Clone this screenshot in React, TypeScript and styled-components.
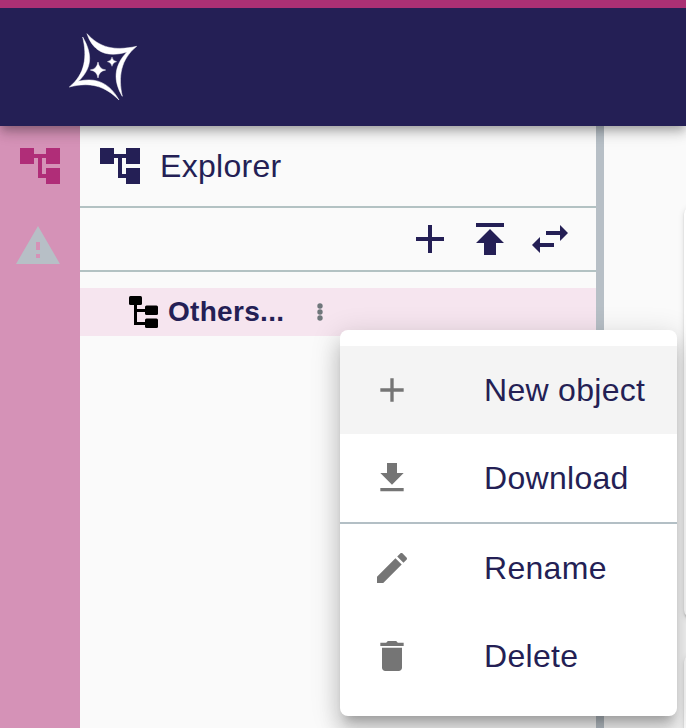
import React from 'react';
import styled, { createGlobalStyle } from 'styled-components';

const NAVY = '#241f55';
const PINK = '#b02d78';
const GREY = '#b7bfc6';
const RULE = '#b3bfc5';

const GlobalStyle = createGlobalStyle`
  * { box-sizing: border-box; }
  body {
    margin: 0;
    overflow: hidden;
    font-family: "Liberation Sans", Helvetica, Arial, sans-serif;
    color: ${NAVY};
    background: #fafafa;
  }
`;

const Page = styled.div`
  position: relative;
  display: flex;
  flex-direction: column;
  width: 686px;
  height: 728px;
  overflow: hidden;
`;

const AppBar = styled.header`
  position: relative;
  z-index: 1;
  flex: none;
  height: 126px;
  padding: 24px 0 0 68px;
  border-top: 8px solid #ab3074;
  background: ${NAVY};
  box-shadow: 0 4px 8px -2px rgba(0, 0, 0, 0.2), 0 8px 10px 0 rgba(0, 0, 0, 0.14),
    0 2px 20px 0 rgba(0, 0, 0, 0.12);
`;

const Logo = styled.svg`
  display: block;
  width: 70px;
  height: 70px;
  fill: #fff;
`;

const Workbench = styled.div`
  display: flex;
  flex: 1;
  min-height: 0;
`;

const Rail = styled.nav`
  display: flex;
  flex: none;
  flex-direction: column;
  align-items: flex-start;
  gap: 32px;
  width: 80px;
  padding: 16px 0 0 16px;
  background: #d592b7;
`;

const RailItem = styled.div<{ $shift?: number; $color: string }>`
  display: flex;
  margin-left: ${(p) => p.$shift ?? 0}px;
  color: ${(p) => p.$color};
`;

const Icon = styled.svg<{ $size: number }>`
  display: block;
  flex: none;
  width: ${(p) => p.$size}px;
  height: ${(p) => p.$size}px;
  fill: currentColor;
`;

const Panel = styled.section`
  display: flex;
  flex: none;
  flex-direction: column;
  width: 524px;
  border-right: 8px solid ${GREY};
`;

const PanelHeader = styled.div`
  display: flex;
  align-items: center;
  gap: 16px;
  height: 82px;
  padding: 0 16px;
  border-bottom: 2px solid #b3c2c3;
`;

const PanelTitle = styled.h1`
  margin: 0;
  font-size: 32px;
  font-weight: 400;
  line-height: 48px;
  letter-spacing: 0.3px;
`;

const Toolbar = styled.div`
  display: flex;
  justify-content: flex-end;
  gap: 12px;
  height: 64px;
  padding: 7px 22px 0 0;
  border-bottom: 2px solid #b3c2c3;
`;

const TreeRow = styled.div`
  display: flex;
  align-items: center;
  height: 48px;
  margin-top: 16px;
  padding-left: 48px;
  background: #f6e5ef;
`;

const TreeIcon = styled.svg`
  width: 32px;
  height: 32px;
  fill: #000;
`;

const TreeLabel = styled.span`
  width: 154px;
  padding-left: 8px;
  font-size: 28px;
  font-weight: 700;
  line-height: 48px;
  letter-spacing: 0.3px;
`;

const MoreIcon = styled.svg`
  width: 12px;
  height: 24px;
  fill: #6f777b;
`;

const Cards = styled.main`
  display: flex;
  flex: none;
  flex-direction: column;
  gap: 36px;
  width: 480px;
  padding: 80px 0 0 80px;
`;

const Card = styled.div<{ $height: number }>`
  flex: none;
  height: ${(p) => p.$height}px;
  border-radius: 8px;
  background: #fff;
  box-shadow: 0 4px 2px -2px rgba(0, 0, 0, 0.2), 0 2px 2px 0 rgba(0, 0, 0, 0.14),
    0 2px 6px 0 rgba(0, 0, 0, 0.12);
`;

const Menu = styled.ul`
  position: absolute;
  z-index: 2;
  top: 330px;
  left: 340px;
  width: 337px;
  height: 386px;
  margin: 0;
  padding: 16px 0;
  list-style: none;
  border-radius: 8px;
  background: #fff;
  box-shadow: 0 10px 10px -6px rgba(0, 0, 0, 0.2), 0 16px 20px 2px rgba(0, 0, 0, 0.14),
    0 6px 28px 4px rgba(0, 0, 0, 0.12);
`;

const MenuItem = styled.li<{ $active?: boolean }>`
  display: flex;
  align-items: center;
  height: 88px;
  padding-left: 32px;
  background: ${(p) => (p.$active ? '#f4f4f4' : 'transparent')};
`;

const MenuIcon = styled.div`
  width: 112px;
  color: #757575;
`;

const MenuLabel = styled.span`
  font-size: 32px;
  line-height: 48px;
  letter-spacing: 0.3px;
`;

const Divider = styled.li`
  height: 2px;
  background: ${RULE};
`;

const paths = {
  tree: 'M22 11V3h-7v3H9V3H2v8h7V8h2v10h4v3h7v-8h-7v3h-2V8h2v3z',
  warning: 'M1 21h22L12 2 1 21zm12-3h-2v-2h2v2zm0-4h-2v-4h2v4z',
  add: 'M19 13h-6v6h-2v-6H5v-2h6V5h2v6h6v2z',
  publish: 'M5 4v2h14V4H5zm0 10h4v6h6v-6h4l-7-7-7 7z',
  swap: 'M6.99 11L3 15l3.99 4v-3H14v-2H6.99v-3zM21 9l-3.99-4v3H10v2h7.01v3L21 9z',
  download: 'M19 9h-4V3H9v6H5l7 7 7-7zM5 18v2h14v-2H5z',
  edit: 'M3 17.25V21h3.75L17.81 9.94l-3.75-3.75L3 17.25zM20.71 7.04c.39-.39.39-1.02 0-1.41l-2.34-2.34c-.39-.39-1.02-.39-1.41 0l-1.83 1.83 3.75 3.75 1.83-1.83z',
  remove: 'M6 19c0 1.1.9 2 2 2h8c1.1 0 2-.9 2-2V7H6v12zM19 4h-3.5l-1-1h-5l-1 1H5v2h14V4z',
};

type IconName = keyof typeof paths;

const Glyph = ({ name, size = 48 }: { name: IconName; size?: number }) => (
  <Icon viewBox="0 0 24 24" $size={size} aria-hidden>
    <path d={paths[name]} />
  </Icon>
);

const Entry = ({ icon, label, active }: { icon: IconName; label: string; active?: boolean }) => (
  <MenuItem $active={active}>
    <MenuIcon>
      <Glyph name={icon} size={40} />
    </MenuIcon>
    <MenuLabel>{label}</MenuLabel>
  </MenuItem>
);

export default function App() {
  return (
    <Page>
      <GlobalStyle />
      <AppBar>
        <Logo viewBox="54 36 210 210">
          <g stroke="#fff" strokeWidth="1.5" strokeLinejoin="bevel">
            <path d="M111 41C148 82 190 94 260 79C212 118 204 170 217 229C190 184 190 138 231 96C178 112 131 102 111 41Z" />
            <path d="M98 51C130 105 125 146 85 184C137 171 178 188 207 240C164 197 120 185 58 201C106 162 112 110 98 51Z" />
          </g>
          <path d="M144 126Q147 147 167 150Q147 153 144 174Q141 153 121 150Q141 147 144 126Z" stroke="#fff" strokeWidth="1.5" />
          <path d="M186 111Q188 123 200 125Q188 127 186 139Q184 127 172 125Q184 123 186 111Z" stroke="#fff" />
        </Logo>
      </AppBar>
      <Workbench>
        <Rail>
          <RailItem $color={PINK}>
            <Glyph name="tree" />
          </RailItem>
          <RailItem $color={GREY} $shift={-2}>
            <Glyph name="warning" />
          </RailItem>
        </Rail>
        <Panel>
          <PanelHeader>
            <Glyph name="tree" />
            <PanelTitle>Explorer</PanelTitle>
          </PanelHeader>
          <Toolbar>
            <Glyph name="add" />
            <Glyph name="publish" />
            <Glyph name="swap" />
          </Toolbar>
          <TreeRow>
            <TreeIcon viewBox="0 0 32 32">
              <rect x="1" y="0" width="13" height="9" rx="1.5" />
              <rect x="17" y="9.5" width="13" height="9.5" rx="1.5" />
              <rect x="17" y="22.5" width="13" height="9.5" rx="1.5" />
              <path d="M6 8h3v5h9v3H9v10h9v3H6z" />
            </TreeIcon>
            <TreeLabel>Others...</TreeLabel>
            <MoreIcon viewBox="0 0 12 24">
              <circle cx="6" cy="6" r="2.7" />
              <circle cx="6" cy="12" r="2.7" />
              <circle cx="6" cy="18" r="2.7" />
            </MoreIcon>
          </TreeRow>
        </Panel>
        <Cards>
          <Card $height={412} />
          <Card $height={200} />
        </Cards>
      </Workbench>
      <Menu>
        <Entry icon="add" label="New object" active />
        <Entry icon="download" label="Download" />
        <Divider />
        <Entry icon="edit" label="Rename" />
        <Entry icon="remove" label="Delete" />
      </Menu>
    </Page>
  );
}
